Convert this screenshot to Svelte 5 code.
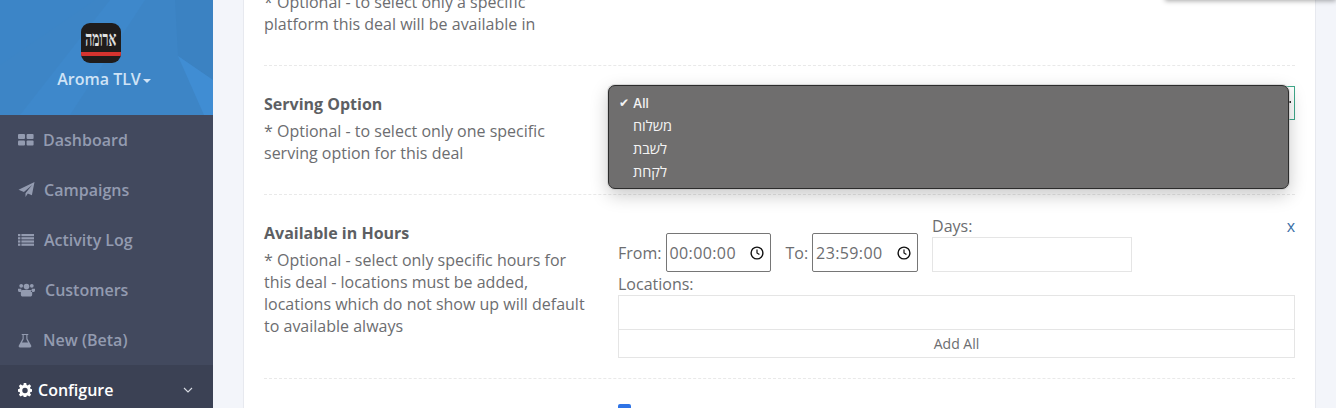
<script>
  const menu = [
    { label: 'Dashboard', icon: 'grid', gap: 9 },
    { label: 'Campaigns', icon: 'plane', gap: 9 },
    { label: 'Activity Log', icon: 'list', gap: 10 },
    { label: 'Customers', icon: 'users', gap: 10 },
    { label: 'New (Beta)', icon: 'flask', gap: 11 }
  ];
  const options = ['משלוח', 'לשבת', 'לקחת'];
</script>

{#snippet clock()}
  <svg class="clock" viewBox="0 0 14 14" width="14" height="14">
    <circle cx="7" cy="7" r="5.9" fill="none" stroke="#111" stroke-width="1.4" />
    <path d="M7 3.4V7l2.4 1.6" fill="none" stroke="#111" stroke-width="1.2" />
  </svg>
{/snippet}

<div class="app">
  <aside class="sidebar">
    <div class="brand">
      <svg class="texture" viewBox="0 0 213 115" preserveAspectRatio="none">
        <polygon points="0,0 95,0 0,65" fill="#3c85c7" />
        <polygon points="110,0 145,0 70,115 20,115" fill="#3e88cb" />
        <polygon points="175,0 213,0 213,80 178,56" fill="#3b82c2" />
        <polygon points="178,56 213,80 213,115 204,115" fill="#408dd3" />
      </svg>
      <div class="logo">
        <span class="logo-text">ארומה</span>
        <span class="logo-bar"></span>
      </div>
      <div class="store">Aroma TLV<span class="caret"></span></div>
    </div>

    <nav>
      {#each menu as item}
        <a class="item" href="#top">
          <span class="icon">
            {#if item.icon === 'grid'}
              <svg viewBox="0 0 16 14" width="16" height="14" fill="currentColor">
                <rect y="1" width="7" height="5" rx="1" /><rect x="8.6" y="1" width="7" height="5" rx="1" />
                <rect y="7.6" width="7" height="5" rx="1" /><rect x="8.6" y="7.6" width="7" height="5" rx="1" />
              </svg>
            {:else if item.icon === 'plane'}
              <svg viewBox="0 0 16 16" width="17" height="16" fill="currentColor">
                <path d="M16 0 13.4 13.2 9.3 11.4 7 15V11.2L13.6 3 5.4 10 0 7.7Z" />
              </svg>
            {:else if item.icon === 'list'}
              <svg viewBox="0 0 16 14" width="16" height="14" fill="currentColor">
                <rect y="1" width="2.4" height="2.2" /><rect x="3.4" y="1" width="12.6" height="2.2" />
                <rect y="4.2" width="2.4" height="2.2" /><rect x="3.4" y="4.2" width="12.6" height="2.2" />
                <rect y="7.4" width="2.4" height="2.2" /><rect x="3.4" y="7.4" width="12.6" height="2.2" />
                <rect y="10.6" width="2.4" height="2.2" /><rect x="3.4" y="10.6" width="12.6" height="2.2" />
              </svg>
            {:else if item.icon === 'users'}
              <svg viewBox="0 0 18 16" width="17" height="16" fill="currentColor">
                <circle cx="3.4" cy="3.6" r="2" /><circle cx="14.6" cy="3.6" r="2" /><circle cx="9" cy="4.4" r="3" />
                <path d="M0 6.6h3.4A4.5 4.5 0 0 0 4.6 10H1.6C.6 10 0 9.2 0 8.4ZM18 6.6h-3.4A4.5 4.5 0 0 1 13.4 10h3c1 0 1.6-.8 1.6-1.6ZM5 8h8c1.4 0 2 1 2 2.4V13c0 1.2-.9 2-2 2H5c-1.100 0-2-.8-2-2v-2.600C3 9 3.600 8 5 8Z" />
              </svg>
            {:else}
              <svg viewBox="0 0 14 16" width="14" height="15" fill="currentColor">
                <path d="M3.500 1h7v1H9.600v4.200l4 7.200c.5 1-.1 2-1.200 2H1.600C.5 15.400-.1 14.400.4 13.400l4-7.200V2H3.500ZM5.600 2v4.600L3.800 10h6.400L8.400 6.600V2Z" />
              </svg>
            {/if}
          </span>
          <span style="margin-left: {item.gap}px">{item.label}</span>
        </a>
      {/each}
      <a class="item active" href="#top">
        <svg class="cog" viewBox="0 0 16 16" width="14" height="14" fill="currentColor">
          <path fill-rule="evenodd" d="M6.600 0h2.800l.4 2.200 1.300.6L13 1.500 15 3.500l-1.300 1.900.5 1.300 2.200.4v2.800l-2.200.4-.5 1.300L15 13.500 13 15.500l-1.900-1.300-1.300.5-.4 2.300H6.600l-.4-2.300-1.300-.5L3 15.500 1 13.500l1.300-1.900-.5-1.300L-.400 9.900V7.100l2.200-.4.5-1.300L1 3.500 3 1.500l1.900 1.300 1.300-.6ZM8 5.400a3.100 3.100 0 1 0 0 6.200 3.100 3.100 0 0 0 0-6.200Z" />
        </svg>
        <span class="active-label">Configure</span>
        <svg class="chevron" viewBox="0 0 10 6" width="10" height="6">
          <path d="M1 1l4 4 4-4" fill="none" stroke="currentColor" stroke-width="1.100" />
        </svg>
      </a>
    </nav>
  </aside>

  <main class="main">
    <section class="card">
      <div class="row first">
        <div class="label">
          <p>* Optional - to select only a specific platform this deal will be available in</p>
        </div>
      </div>

      <div class="row">
        <div class="label">
          <h4>Serving Option</h4>
          <p>* Optional - to select only one specific serving option for this deal</p>
        </div>
        <div class="field">
          <div class="select"><span class="arrow"></span></div>
          <ul class="popup">
            <li><span class="check">✔</span>All</li>
            {#each options as option}
              <li class="he">{option}</li>
            {/each}
          </ul>
        </div>
      </div>

      <div class="row hours-row">
        <div class="label">
          <h4>Available in Hours</h4>
          <p>* Optional - select only specific hours for this deal - locations must be added, locations which do not show up will default to available always</p>
        </div>
        <div class="field hours">
          <div class="times">
            <span>From:</span>
            <div class="time from">00:00:00{@render clock()}</div>
            <span class="to">To:</span>
            <div class="time">23:59:00{@render clock()}</div>
            <div class="days">
              <span>Days:</span>
              <div class="days-box"></div>
            </div>
            <a class="remove" href="#top">x</a>
          </div>
          <div class="locations">Locations:</div>
          <div class="loc-box"></div>
          <button class="add-all">Add All</button>
        </div>
      </div>

      <div class="row last">
        <div class="field">
          <span class="checkbox">
            <svg viewBox="0 0 13 13" width="13" height="13">
              <path d="M3 6.800l2.500 2.500L10 1" fill="none" stroke="#fff" stroke-width="2" />
            </svg>
          </span>
        </div>
      </div>
    </section>
    <div class="toast"></div>
  </main>
</div>

<style>
  :global(body) {
    overflow: hidden;
    font-family: "Open Sans", sans-serif;
  }

  .app {
    display: flex;
    height: 408px;
    overflow: hidden;
    background: #f3f5fa;
  }

  .sidebar {
    flex: 0 0 213px;
    background: #42495e;
  }

  .brand {
    position: relative;
    display: flex;
    flex-direction: column;
    align-items: center;
    height: 115px;
    padding-top: 23px;
    box-sizing: border-box;
    background: #3d85c6;
    overflow: hidden;
  }

  .texture {
    position: absolute;
    inset: 0;
    width: 100%;
    height: 100%;
  }

  .logo {
    position: relative;
    width: 40px;
    height: 40px;
    margin-right: 12px;
    border-radius: 9px;
    background: #1f1c1c;
    overflow: hidden;
    display: flex;
    justify-content: center;
  }

  .logo-text {
    margin-top: 7px;
    font: bold 21px/19px "Liberation Serif", serif;
    color: #e0e0e0;
    transform: scaleX(0.58);
    transform-origin: center top;
  }

  .logo-bar {
    position: absolute;
    left: 0;
    right: 0;
    top: 29px;
    height: 4px;
    background: #d5332f;
  }

  .store {
    position: relative;
    margin-top: 5px;
    margin-right: 5px;
    font-size: 16px;
    line-height: 22px;
    font-weight: 600;
    color: #cfe3f6;
  }

  .caret {
    display: inline-block;
    margin-left: 2px;
    vertical-align: middle;
    border: 4px solid transparent;
    border-top-color: #cfe3f6;
    border-bottom: 0;
  }

  nav {
    display: flex;
    flex-direction: column;
  }

  .item {
    display: flex;
    align-items: center;
    height: 50px;
    padding: 0 18px;
    box-sizing: border-box;
    font-size: 16px;
    font-weight: 600;
    color: #939bb0;
    text-decoration: none;
  }

  .icon {
    display: flex;
    align-items: center;
  }

  .active {
    background: #3b4154;
    color: #fff;
  }

  .active-label {
    margin-left: 6px;
    font-weight: 600;
  }

  .chevron {
    margin-left: auto;
    margin-right: 2px;
    color: #d8dbe3;
  }

  .main {
    position: relative;
    flex: 1;
    padding: 0 20px 0 30px;
  }

  .card {
    min-height: 100%;
    padding: 0 20px;
    background: #fff;
    border-left: 1px solid #e7e9ef;
    border-right: 1px solid #e7e9ef;
    box-sizing: border-box;
  }

  .row {
    display: grid;
    grid-template-columns: 354px 1fr;
    padding: 20px 0;
    border-bottom: 1px dashed #e9e9e9;
  }

  .row.first {
    margin-top: -9px;
    padding: 0 0 30px;
    height: 75px;
    box-sizing: border-box;
  }

  .row.hours-row {
    padding-top: 19px;
  }

  .row.last {
    border-bottom: 0;
    padding-top: 25px;
  }

  .row.last .field {
    grid-column: 2;
  }

  .label {
    padding: 7px 0 10px;
    width: 325px;
  }

  .hours-row .label {
    padding-top: 8px;
  }

  .row.first .label {
    padding: 0;
  }

  h4 {
    margin: 0 0 5px;
    font-size: 16px;
    line-height: 22px;
    font-weight: 700;
    color: #5d5f63;
  }

  p {
    margin: 0;
    font-size: 16px;
    line-height: 22px;
    color: #6c6d70;
  }

  .field {
    position: relative;
    min-width: 0;
  }

  .select {
    position: relative;
    height: 34px;
    border: 1px solid #3fa88a;
    box-sizing: border-box;
  }

  .arrow {
    position: absolute;
    right: 3px;
    top: 14px;
    width: 3px;
    height: 2px;
    background: #333;
  }

  .popup {
    position: absolute;
    left: -10px;
    top: -1px;
    width: 681px;
    height: 104px;
    margin: 0;
    padding: 6px 0 0;
    box-sizing: border-box;
    list-style: none;
    background: #6f6e6e;
    border: 1px solid #2c2c2c;
    border-radius: 7px;
    box-shadow: 0 0 0 1px rgba(190, 190, 190, 0.5), 0 6px 18px rgba(0, 0, 0, 0.22);
    font-family: Inter, "Noto Sans", "Liberation Sans", sans-serif;
    font-size: 13px;
    font-weight: 500;
    color: #f4f4f4;
  }

  .popup li {
    position: relative;
    height: 23px;
    line-height: 23px;
    padding-left: 24px;
  }

  .popup li.he {
    font-family: "Open Sans", "Liberation Sans", sans-serif;
    font-size: 14.500px;
    font-weight: 500;
    line-height: 21px;
  }

  .check {
    position: absolute;
    left: 10px;
    font-size: 12px;
    font-family: "DejaVu Sans", sans-serif;
  }

  .hours {
    font-size: 16px;
    color: #6c6d70;
  }

  .times {
    position: relative;
    display: flex;
    align-items: flex-end;
    height: 58px;
    line-height: 37px;
  }

  .time {
    display: flex;
    align-items: center;
    justify-content: space-between;
    width: 106px;
    height: 39px;
    margin-left: 4px;
    padding: 0 6px 0 3px;
    box-sizing: border-box;
    border: 1px solid #767676;
    border-radius: 2px;
    line-height: 1;
    letter-spacing: 0.4px;
  }

  .time.from {
    width: 105px;
    margin-left: 5px;
    padding-left: 2px;
  }

  .to {
    margin-left: 14px;
  }

  .days {
    display: flex;
    flex-direction: column;
    width: 200px;
    margin-left: 14px;
    line-height: 22px;
  }

  .days-box {
    height: 35px;
    border: 1px solid #e5e5e5;
    box-sizing: border-box;
  }

  .remove {
    position: absolute;
    right: 0;
    top: 1px;
    line-height: 22px;
    color: #3a6ea5;
    text-decoration: none;
  }

  .locations {
    line-height: 24px;
    height: 23px;
  }

  .loc-box {
    height: 35px;
    border: 1px solid #e5e5e5;
    box-sizing: border-box;
  }

  .add-all {
    display: block;
    width: 100%;
    height: 28px;
    padding: 0;
    background: #fff;
    border: 1px solid #e5e5e5;
    border-top: 0;
    font: 14px "Open Sans", sans-serif;
    color: #6c6d70;
  }

  .checkbox {
    display: block;
    width: 13px;
    height: 13px;
    background: #2f74e6;
    border-radius: 2px;
  }

  .toast {
    position: absolute;
    right: 0;
    top: -10px;
    width: 171px;
    height: 10px;
    background: #fff;
    box-shadow: 0 1px 5px rgba(0, 0, 0, 0.35);
  }
</style>
